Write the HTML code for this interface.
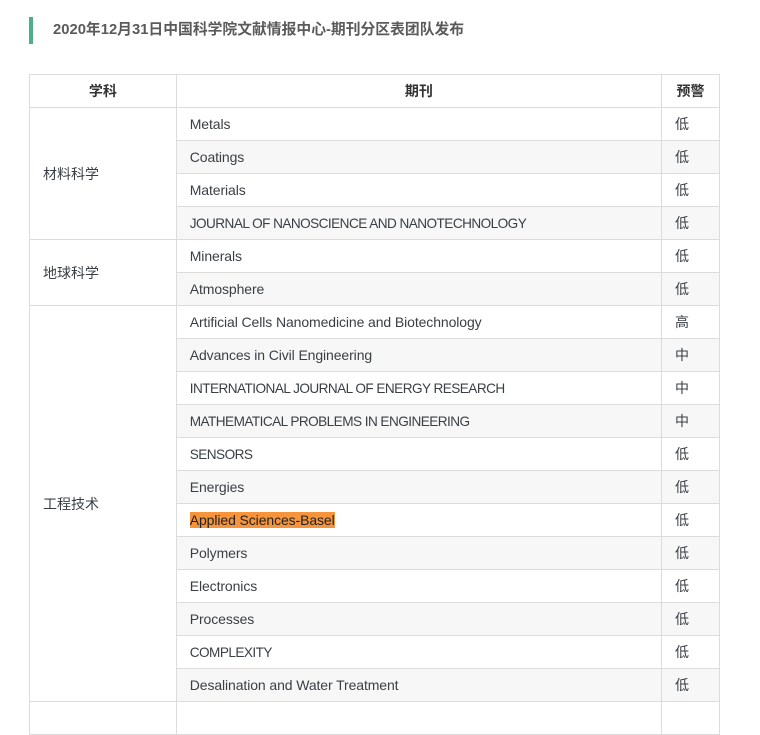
<!DOCTYPE html>
<html><head><meta charset="utf-8"><style>
body{margin:0;background:#fff;font-family:"Liberation Sans","Noto Sans CJK SC",sans-serif;color:#3a3f45;}
.t{position:absolute;left:29px;top:17px;height:27px;border-left:4px solid #4caf85;padding-left:20px;line-height:27px;font-size:14.8px;font-weight:bold;color:#5a5a5a;}
table{position:absolute;left:29px;top:74px;border-collapse:collapse;width:691px;font-size:14px;}
td,th{border:1px solid #dcdcdc;height:32px;padding:0 0 0 13px;text-align:left;}
td.j{letter-spacing:-0.1px;}
td.u{font-size:13.6px;letter-spacing:-0.55px;}
th{text-align:center;padding:0;font-weight:bold;color:#333;}
tr:nth-child(odd) td{background:#f7f7f7;}
tr:nth-child(odd) td.s{background:#fff;}
td.s{vertical-align:middle;}
mark{background:#f5943a;color:#222;padding:0;}
</style></head><body>
<div class="t">2020年12月31日中国科学院文献情报中心-期刊分区表团队发布</div>
<table>
<colgroup><col style="width:147px"><col style="width:486px"><col style="width:58px"></colgroup>
<tr><th>学科</th><th>期刊</th><th>预警</th></tr>
<tr><td class="s" rowspan="4">材料科学</td><td class="j">Metals</td><td>低</td></tr>
<tr><td class="j">Coatings</td><td>低</td></tr>
<tr><td class="j">Materials</td><td>低</td></tr>
<tr><td class="u">JOURNAL OF NANOSCIENCE AND NANOTECHNOLOGY</td><td>低</td></tr>
<tr><td class="s" rowspan="2">地球科学</td><td class="j">Minerals</td><td>低</td></tr>
<tr><td class="j">Atmosphere</td><td>低</td></tr>
<tr><td class="s" rowspan="12">工程技术</td><td class="j">Artificial Cells Nanomedicine and Biotechnology</td><td>高</td></tr>
<tr><td class="j">Advances in Civil Engineering</td><td>中</td></tr>
<tr><td class="u">INTERNATIONAL JOURNAL OF ENERGY RESEARCH</td><td>中</td></tr>
<tr><td class="u">MATHEMATICAL PROBLEMS IN ENGINEERING</td><td>中</td></tr>
<tr><td class="u">SENSORS</td><td>低</td></tr>
<tr><td class="j">Energies</td><td>低</td></tr>
<tr><td class="j"><mark>Applied Sciences-Basel</mark></td><td>低</td></tr>
<tr><td class="j">Polymers</td><td>低</td></tr>
<tr><td class="j">Electronics</td><td>低</td></tr>
<tr><td class="j">Processes</td><td>低</td></tr>
<tr><td class="u">COMPLEXITY</td><td>低</td></tr>
<tr><td class="j">Desalination and Water Treatment</td><td>低</td></tr>
<tr><td class="s"></td><td></td><td></td></tr>
</table>
</body></html>
